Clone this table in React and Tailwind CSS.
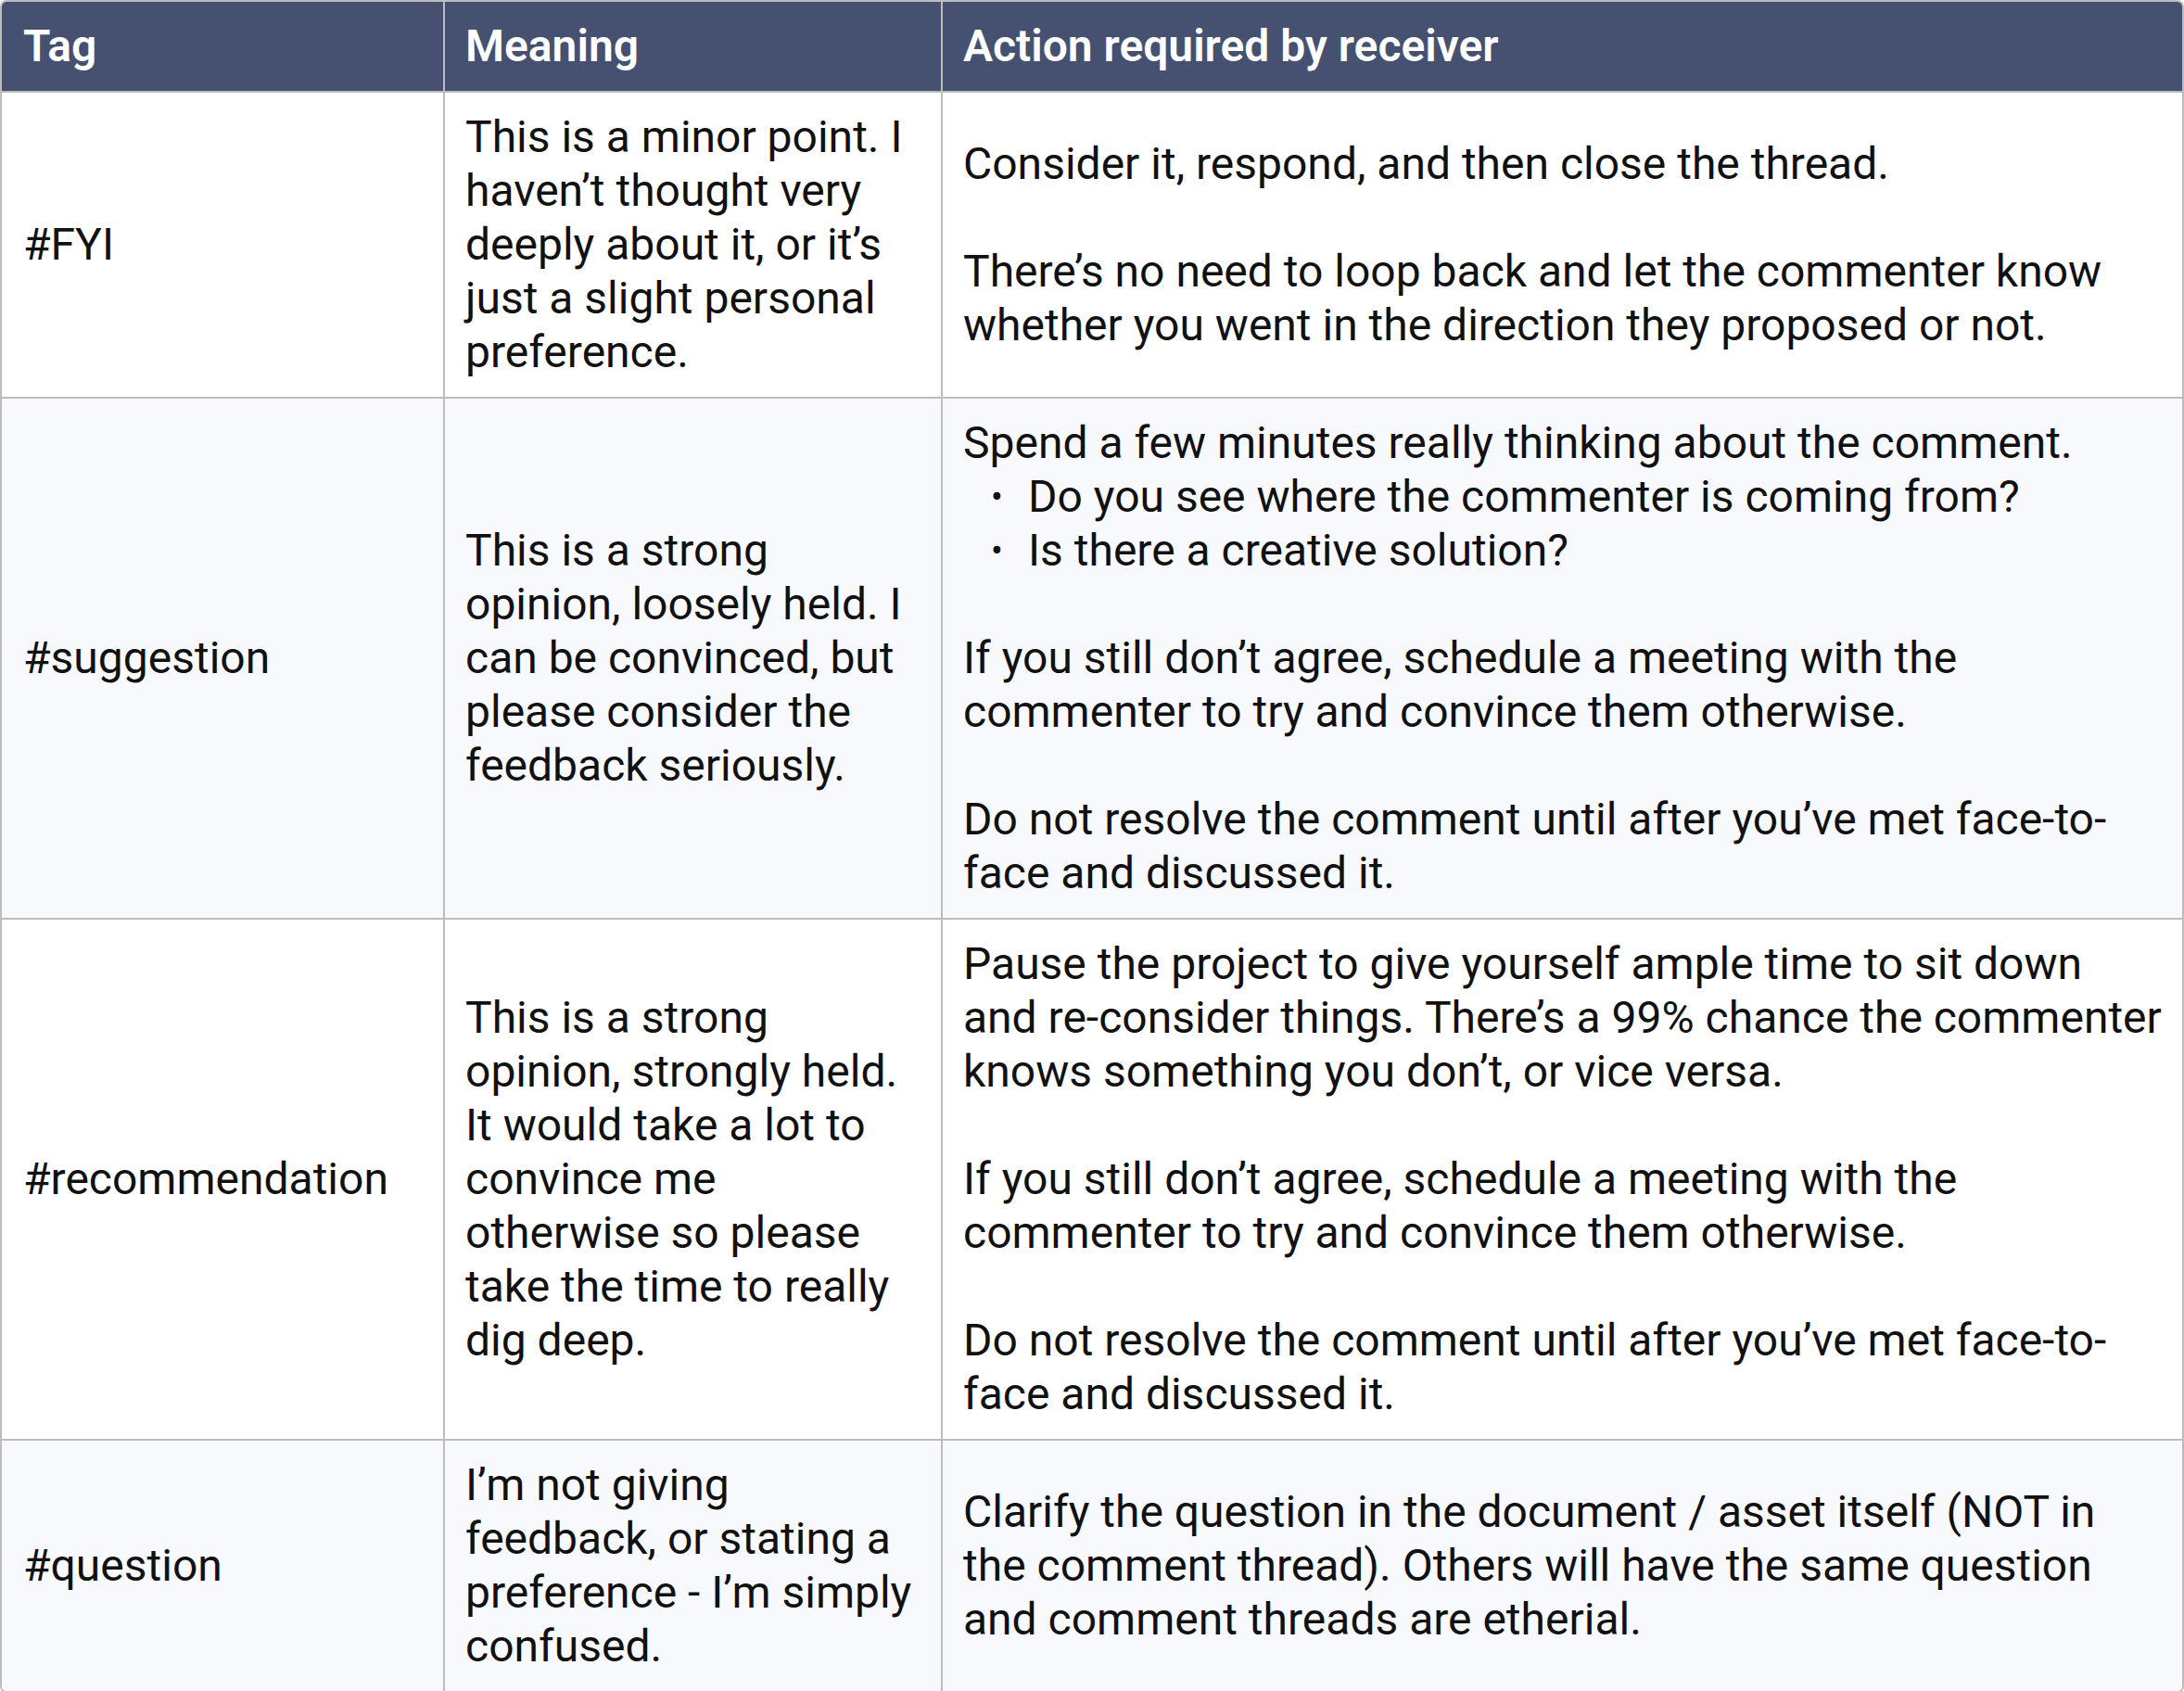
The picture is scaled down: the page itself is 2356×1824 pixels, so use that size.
import React from 'react';

const rows = [
  {
    tag: '#FYI',
    meaning: 'This is a minor point. I haven’t thought very deeply about it, or it’s just a slight personal preference.',
    action: [
      { text: 'Consider it, respond, and then close the thread.' },
      { text: 'There’s no need to loop back and let the commenter know whether you went in the direction they proposed or not.' },
    ],
  },
  {
    tag: '#suggestion',
    meaning: 'This is a strong opinion, loosely held. I can be convinced, but please consider the feedback seriously.',
    action: [
      {
        text: 'Spend a few minutes really thinking about the comment.',
        bullets: ['Do you see where the commenter is coming from?', 'Is there a creative solution?'],
      },
      { text: 'If you still don’t agree, schedule a meeting with the commenter to try and convince them otherwise.' },
      { text: 'Do not resolve the comment until after you’ve met face-to-face and discussed it.' },
    ],
  },
  {
    tag: '#recommendation',
    meaning: 'This is a strong opinion, strongly held. It would take a lot to convince me otherwise so please take the time to really dig deep.',
    action: [
      { text: 'Pause the project to give yourself ample time to sit down and re-consider things. There’s a 99% chance the commenter knows something you don’t, or vice versa.' },
      { text: 'If you still don’t agree, schedule a meeting with the commenter to try and convince them otherwise.' },
      { text: 'Do not resolve the comment until after you’ve met face-to-face and discussed it.' },
    ],
  },
  {
    tag: '#question',
    meaning: 'I’m not giving feedback, or stating a preference - I’m simply confused.',
    action: [
      { text: 'Clarify the question in the document / asset itself (NOT in the comment thread). Others will have the same question and comment threads are etherial.' },
    ],
  },
];

export default function App() {
  return (
    <div className="w-[2356px] h-[1824px] bg-white" style={{ fontFamily: 'Roboto, "Liberation Sans", sans-serif' }}>
      <div className="border-2 border-[#bdbdbd] rounded-[7px] overflow-hidden">
        <table className="w-full border-collapse text-[48px] leading-[58px] text-[#111111]">
          <colgroup>
            <col className="w-[477px]" />
            <col className="w-[537px]" />
            <col />
          </colgroup>
          <thead>
            <tr className="bg-[#465070] text-white h-[97px]">
              <th className="text-left font-semibold px-[23px] align-middle">Tag</th>
              <th className="text-left font-semibold px-[22px] align-middle border-l-2 border-[#bdbdbd]">Meaning</th>
              <th className="text-left font-semibold px-[22px] align-middle border-l-2 border-[#bdbdbd]">Action required by receiver</th>
            </tr>
          </thead>
          <tbody>
            {rows.map((row, i) => (
              <tr key={row.tag} className={i % 2 === 1 ? 'bg-[#f8f9fd]' : 'bg-white'}>
                <td className="px-[23px] py-[19px] align-middle border-t-2 border-[#bdbdbd]">{row.tag}</td>
                <td className="px-[22px] py-[19px] align-middle border-t-2 border-l-2 border-[#bdbdbd]">{row.meaning}</td>
                <td className="px-[22px] py-[19px] align-middle border-t-2 border-l-2 border-[#bdbdbd]">
                  <div className="flex flex-col gap-[58px]">
                    {row.action.map((p, j) => (
                      <div key={j}>
                        <p>{p.text}</p>
                        {p.bullets && (
                          <ul className="pl-[30px]">
                            {p.bullets.map((b) => (
                              <li key={b} className="flex">
                                <span className="w-[40px] shrink-0 text-[38px]">•</span>
                                <span>{b}</span>
                              </li>
                            ))}
                          </ul>
                        )}
                      </div>
                    ))}
                  </div>
                </td>
              </tr>
            ))}
          </tbody>
        </table>
      </div>
    </div>
  );
}
